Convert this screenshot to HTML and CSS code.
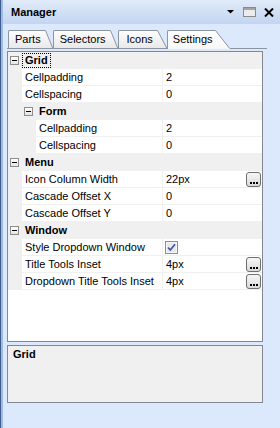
FILE: index.html
```html
<!DOCTYPE html>
<html>
<head>
<meta charset="utf-8">
<link rel="stylesheet" href="styles.css">
</head>
<body>
<svg class="defs" width="0" height="0">
  <defs>
    <linearGradient id="tabg" x1="0" y1="0" x2="0" y2="1">
      <stop offset="0" stop-color="#fdfdfd"/>
      <stop offset="1" stop-color="#e9e9e9"/>
    </linearGradient>
    <linearGradient id="tabga" x1="0" y1="0" x2="0" y2="1">
      <stop offset="0" stop-color="#ffffff"/>
      <stop offset="1" stop-color="#f7f7f7"/>
    </linearGradient>
    <linearGradient id="btng" x1="0" y1="0" x2="0" y2="1">
      <stop offset="0" stop-color="#f8f8f8"/>
      <stop offset="1" stop-color="#d9d9d9"/>
    </linearGradient>
  </defs>
</svg>
<div class="app">
  <div class="inner">
    <div class="titlebar">
      <span class="title">Manager</span>
      <span class="tools">
        <svg class="tool-tri" width="7" height="4" viewBox="0 0 7 4"><polygon points="0,0 7,0 3.5,3.6" fill="#000"/></svg>
        <svg class="tool-win" width="13" height="10" viewBox="0 0 13 10"><rect x="0.5" y="0.5" width="12" height="9" fill="#ececec" stroke="#8a8a8a"/><rect x="1" y="1" width="11" height="2" fill="#a4a4a4"/></svg>
        <svg class="tool-close" width="10" height="9" viewBox="0 0 10 9"><path d="M1 0.5 L9 8.5 M9 0.5 L1 8.5" stroke="#000" stroke-width="2"/></svg>
      </span>
    </div>
    <div class="tabs">
      <div class="tab"><span class="tab-body">Parts</span><svg class="slant" width="9" height="18" viewBox="0 0 9 18"><polygon points="0,1 1.5,1 9,18 0,18" fill="url(#tabg)"/><polyline points="0,0.5 1.5,0.5 8.7,18" fill="none" stroke="#8c96a0"/></svg></div>
      <div class="tab"><span class="tab-body">Selectors</span><svg class="slant" width="9" height="18" viewBox="0 0 9 18"><polygon points="0,1 1.5,1 9,18 0,18" fill="url(#tabg)"/><polyline points="0,0.5 1.5,0.5 8.7,18" fill="none" stroke="#8c96a0"/></svg></div>
      <div class="tab tab-icons"><span class="tab-body">Icons</span><svg class="slant" width="11" height="18" viewBox="0 0 11 18"><polygon points="0,1 1.5,1 11,18 0,18" fill="url(#tabg)"/><polyline points="0,0.5 1.5,0.5 10.7,18" fill="none" stroke="#8c96a0"/></svg></div>
      <div class="tab active"><span class="tab-body">Settings</span><svg class="slant" width="16" height="19" viewBox="0 0 16 19"><polygon points="0,1 1.5,1 16,19 0,19" fill="url(#tabga)"/><polyline points="0,0.5 1.5,0.5 15.3,18" fill="none" stroke="#8c96a0"/></svg></div>
    </div>
    <div class="page">
      <div class="grid">
        <div class="row cat"><span class="exp"></span><span class="cat-label focus">Grid</span></div>
        <div class="row prop"><span class="gut"></span><span class="lbl">Cellpadding</span><span class="val">2</span></div>
        <div class="row prop"><span class="gut"></span><span class="lbl">Cellspacing</span><span class="val">0</span></div>
        <div class="row cat lvl1"><span class="exp"></span><span class="cat-label">Form</span></div>
        <div class="row prop lvl1"><span class="gut"></span><span class="lbl">Cellpadding</span><span class="val">2</span></div>
        <div class="row prop lvl1"><span class="gut"></span><span class="lbl">Cellspacing</span><span class="val">0</span></div>
        <div class="row cat"><span class="exp"></span><span class="cat-label">Menu</span></div>
        <div class="row prop"><span class="gut"></span><span class="lbl">Icon Column Width</span><span class="val">22px<svg class="dots" width="15" height="15" viewBox="0 0 15 15"><rect x="0.5" y="0.5" width="14" height="14" rx="2.5" fill="url(#btng)" stroke="#6f6f6f"/><rect x="4" y="10" width="2" height="2" fill="#000"/><rect x="7" y="10" width="2" height="2" fill="#000"/><rect x="10" y="10" width="2" height="2" fill="#000"/></svg></span></div>
        <div class="row prop"><span class="gut"></span><span class="lbl">Cascade Offset X</span><span class="val">0</span></div>
        <div class="row prop"><span class="gut"></span><span class="lbl">Cascade Offset Y</span><span class="val">0</span></div>
        <div class="row cat"><span class="exp"></span><span class="cat-label">Window</span></div>
        <div class="row prop"><span class="gut"></span><span class="lbl">Style Dropdown Window</span><span class="val"><svg class="check" width="13" height="13" viewBox="0 0 13 13"><rect x="0.5" y="0.5" width="12" height="12" fill="#e9e9ea" stroke="#8b8f94"/><rect x="1.5" y="1.5" width="10" height="10" fill="none" stroke="#f6f6f6"/><path d="M3 6.5 L5.3 9 L10 3.3" fill="none" stroke="#3b56a8" stroke-width="1.7"/></svg></span></div>
        <div class="row prop"><span class="gut"></span><span class="lbl">Title Tools Inset</span><span class="val">4px<svg class="dots" width="15" height="15" viewBox="0 0 15 15"><rect x="0.5" y="0.5" width="14" height="14" rx="2.5" fill="url(#btng)" stroke="#6f6f6f"/><rect x="4" y="10" width="2" height="2" fill="#000"/><rect x="7" y="10" width="2" height="2" fill="#000"/><rect x="10" y="10" width="2" height="2" fill="#000"/></svg></span></div>
        <div class="row prop"><span class="gut"></span><span class="lbl">Dropdown Title Tools Inset</span><span class="val">4px<svg class="dots" width="15" height="15" viewBox="0 0 15 15"><rect x="0.5" y="0.5" width="14" height="14" rx="2.5" fill="url(#btng)" stroke="#6f6f6f"/><rect x="4" y="10" width="2" height="2" fill="#000"/><rect x="7" y="10" width="2" height="2" fill="#000"/><rect x="10" y="10" width="2" height="2" fill="#000"/></svg></span></div>
        <div class="grid-fill"></div>
      </div>
      <div class="desc">Grid</div>
    </div>
  </div>
</div>
</body>
</html>
```
FILE: styles.css
```css
* { box-sizing: border-box; }
html, body { margin: 0; padding: 0; }
body {
  width: 280px;
  height: 428px;
  overflow: hidden;
  background: #dce9fd;
  font-family: "Liberation Sans", Arial, sans-serif;
  font-size: 11px;
  color: #000;
}
.defs { display: block; width: 0; height: 0; overflow: hidden; }
.app {
  height: 428px;
  border-left: 1px solid #3e5b8c;
  display: flex;
}
.inner {
  flex: 1;
  border-left: 2px solid #9dbbe9;
  display: flex;
  flex-direction: column;
}
.titlebar {
  height: 24px;
  flex: none;
  display: flex;
  align-items: center;
  padding: 0 6px 0 8px;
  background: linear-gradient(#e1ebf9, #c2d5f1);
}
.title { flex: 1; font-weight: bold; line-height: 13px; padding-top: 1px; }
.tools { display: flex; align-items: center; }
.tool-tri { display: block; margin-right: 9px; }
.tool-win { display: block; margin-right: 8px; }
.tool-close { display: block; }

.tabs {
  flex: none;
  display: flex;
  align-items: flex-end;
  height: 19px;
  margin: 6px 13px 0 4px;
  border-bottom: 1px solid #8c96a0;
}
.tab {
  display: flex;
  height: 18px;
  flex: none;
}
.tab:first-child { margin-left: 1px; }
.tab-body {
  display: block;
  height: 100%;
  border-top: 1px solid #8c96a0;
  border-left: 1px solid #8c96a0;
  border-top-left-radius: 2px;
  padding: 0 3px 0 6px;
  line-height: 16px;
  background: linear-gradient(#fdfdfd, #e9e9e9);
  white-space: nowrap;
}
.tab-icons .tab-body { padding-left: 8px; }
.slant { display: block; flex: none; }
.tab.active {
  height: 19px;
  margin-bottom: -1px;
  z-index: 1;
}
.tab.active .tab-body {
  background: linear-gradient(#ffffff, #f7f7f7);
  padding: 0 1px 0 5px;
}

.page {
  flex: 1;
  display: flex;
  flex-direction: column;
  padding: 2px 0 0 4px;
}
.grid {
  width: 256px;
  height: 291px;
  border: 1px solid #828790;
  background: #fff;
  display: flex;
  flex-direction: column;
}
.row {
  display: flex;
  height: 17px;
  flex: none;
}
.cat {
  background: #f0f0f0;
  align-items: center;
  padding-left: 2px;
}
.cat.lvl1 { padding-left: 16px; }
.exp {
  width: 9px;
  height: 9px;
  border: 1px solid #8e8e8e;
  background: linear-gradient(#ffffff, #e4e4e4);
  display: flex;
  align-items: center;
  justify-content: center;
  flex: none;
}
.exp::before {
  content: "";
  width: 5px;
  height: 1px;
  background: #000;
}
.cat-label {
  margin-left: 3px;
  padding: 0 2px;
  border: 1px dotted transparent;
  font-weight: bold;
  line-height: 13px;
}
.cat-label.focus { border-color: #000; }
.gut {
  width: 14px;
  flex: none;
  background: #f0f0f0;
}
.lvl1 .gut { width: 28px; }
.lbl {
  width: 141px;
  flex: none;
  border-right: 1px solid #f0f0f0;
  border-bottom: 1px solid #f0f0f0;
  padding-left: 3px;
  line-height: 16px;
  white-space: nowrap;
  overflow: hidden;
}
.lvl1 .lbl { width: 127px; }
.val {
  flex: 1;
  display: flex;
  align-items: center;
  justify-content: space-between;
  border-bottom: 1px solid #f0f0f0;
  padding: 0 1px 0 3px;
  line-height: 16px;
}
.dots { display: block; flex: none; }
.check { display: block; flex: none; margin-left: -1px; }
.grid-fill { flex: 1; }
.desc {
  width: 256px;
  height: 58px;
  margin-top: 3px;
  border: 1px solid #828790;
  background: #f0f0f0;
  padding: 2px 5px;
  font-weight: bold;
  line-height: 13px;
}
```
